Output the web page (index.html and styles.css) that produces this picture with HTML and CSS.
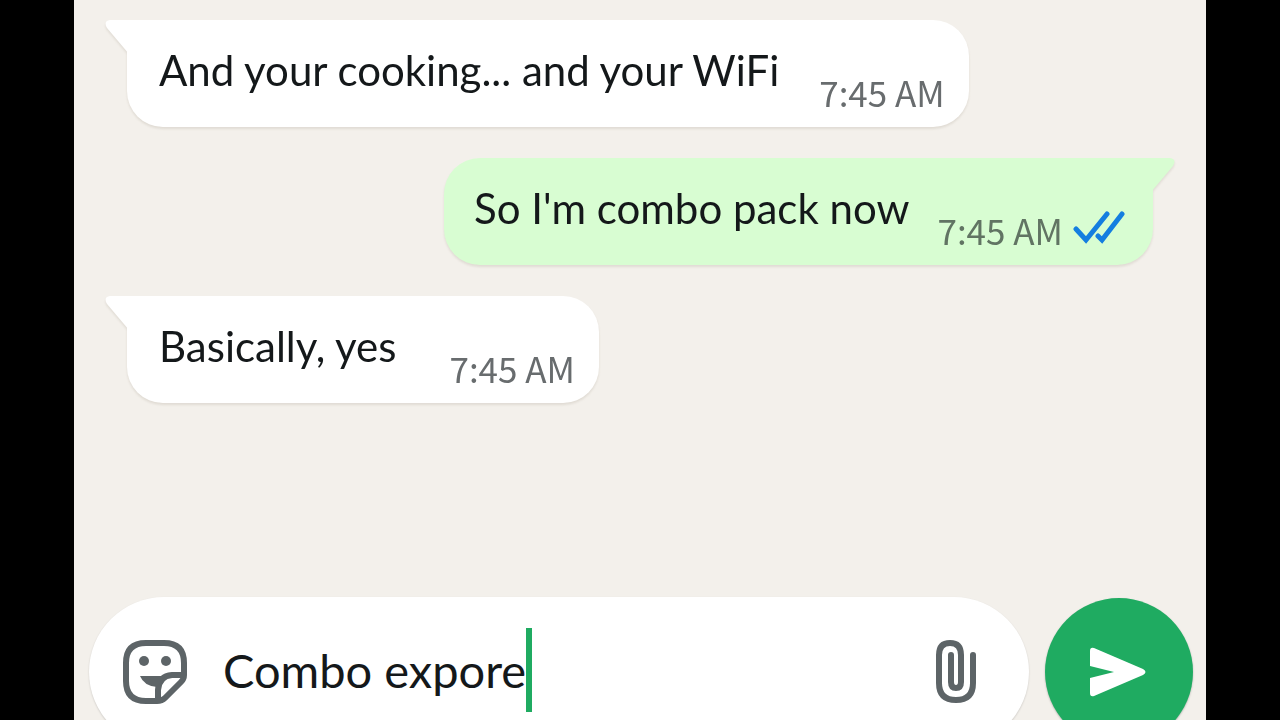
FILE: index.html
```html
<!DOCTYPE html>
<html lang="en">
    <head>
        <meta charset="utf-8">
        <title>Chat</title>
        <link rel="stylesheet" href="styles.css">
    </head>
    <body>
        <main class="chat">
            <section class="messages">
                <div class="bubble received">
                    <svg class="tail" viewBox="0 0 24 34"><path d="M24 0H5Q-2 1 2 8L24 34Z"/></svg>
                    <p class="text">And your cooking... and your WiFi</p>
                    <time class="time">7:45 AM</time>
                </div>
                <div class="bubble sent">
                    <svg class="tail" viewBox="0 0 24 34"><path d="M0 0H19Q26 1 22 8L0 34Z"/></svg>
                    <p class="text">So I'm combo pack now</p>
                    <time class="time">7:45 AM</time>
                    <svg class="ticks" viewBox="0 0 52 34"><path d="M3 19L13 30L34 4M25 26L29 30L49 4"/></svg>
                </div>
                <div class="bubble received">
                    <svg class="tail" viewBox="0 0 24 34"><path d="M24 0H5Q-2 1 2 8L24 34Z"/></svg>
                    <p class="text">Basically, yes</p>
                    <time class="time">7:45 AM</time>
                </div>
            </section>

            <form class="composer">
                <div class="field">
                    <button type="button" class="icon-btn" aria-label="Stickers">
                        <svg class="sticker" viewBox="0 0 64 64">
                            <path class="line" d="M23 3H41Q61 3 61 23V35Q61 39 58 42L42 58Q39 61 34 61H23Q3 61 3 41V23Q3 3 23 3Z"/>
                            <path class="line" d="M35 60V50Q36 36 49 35H60"/>
                            <circle cx="21" cy="21" r="5"/>
                            <circle cx="43" cy="21" r="5"/>
                            <path d="M17 36H42L34 47Q21 46 17 36Z"/>
                        </svg>
                    </button>
                    <div class="typing">
                        <input type="text" class="ipt" value="Combo expore" size="12" aria-label="Message">
                        <span class="caret"></span>
                    </div>
                    <button type="button" class="icon-btn" aria-label="Attach">
                        <svg class="clip" viewBox="0 0 40 64">
                            <path d="M37 15V43Q37 60 20 60Q3 60 3 43V15Q3 3 14 3Q25 3 25 15V42Q25 48 20 48Q15 48 15 42V15"/>
                        </svg>
                    </button>
                </div>
                <button type="button" class="send" aria-label="Send">
                    <svg class="arrow" viewBox="0 0 56 50"><path d="M0 4Q0 0 4 1L53 22Q58 25 53 28L4 49Q0 50 0 46V31L24 25L0 19Z"/></svg>
                </button>
            </form>
        </main>
    </body>
</html>
```
FILE: styles.css
```css
* {
    box-sizing: border-box;
}
body {
    margin: 0;
    padding: 0 74px;
    height: 100vh;
    overflow: hidden;
    background-color: #000;
    font-family: Lato, "Open Sans", sans-serif;
    color: #14181a;
}
button {
    padding: 0;
    border: none;
    background: none;
    cursor: pointer;
}
svg {
    display: block;
}

.chat {
    min-height: 100vh;
    background-color: #f3f0eb;
}
.messages {
    display: flex;
    flex-direction: column;
    align-items: flex-start;
    gap: 31px;
    min-height: calc(100vh - 123px);
    padding: 20px 53px 31px;
}

.bubble {
    position: relative;
    display: flex;
    align-items: flex-end;
    min-width: 472px;
    padding: 20px 24px 15px 32px;
    border-radius: 36px;
    filter: drop-shadow(0 2px 1px rgba(90, 70, 50, 0.12));
}
.received {
    background-color: #fff;
    fill: #fff;
    border-top-left-radius: 0;
}
.sent {
    align-self: flex-end;
    background-color: #d8fdd2;
    fill: #d8fdd2;
    border-top-right-radius: 0;
    padding-left: 30px;
    padding-right: 28px;
}
/* corner of the bubble that points at the speaker */
.tail {
    position: absolute;
    top: 0;
    width: 24px;
    height: 34px;
}
.received .tail {
    left: -22px;
}
.sent .tail {
    right: -22px;
}
.text {
    margin: 0 40px 12px 0;
    font-size: 42px;
    line-height: 60px;
}
.sent .text {
    margin-right: 28px;
}
.time {
    margin-left: auto;
    font-family: "Noto Sans CJK SC", "Noto Sans", sans-serif;
    font-size: 35px;
    line-height: 40px;
    color: #686c6e;
}
.sent .time {
    color: #617463;
}
.ticks {
    width: 52px;
    height: 34px;
    margin: 0 0 6px 10px;
    fill: none;
    stroke: #147ee0;
    stroke-width: 5;
    stroke-linecap: round;
}

.composer {
    display: flex;
    align-items: center;
    gap: 16px;
    padding: 0 13px 0 15px;
}
.field {
    flex: 1;
    display: flex;
    align-items: center;
    height: 150px;
    padding: 0 52px 0 34px;
    border-radius: 75px;
    background-color: #fff;
    box-shadow: 0 1px 2px rgba(0, 0, 0, 0.16);
}
.typing {
    flex: 1;
    display: flex;
    align-items: center;
    margin-left: 36px;
    padding-bottom: 4px;
}
.ipt {
    field-sizing: content;
    padding: 0;
    border: none;
    outline: none;
    background: none;
    font-family: inherit;
    font-size: 47px;
    line-height: 60px;
    color: inherit;
}
.caret {
    width: 6px;
    height: 84px;
    background-color: #1fab61;
}
.sticker {
    width: 64px;
    height: 64px;
    fill: #5d6467;
}
.sticker .line {
    fill: none;
    stroke: #5d6467;
    stroke-width: 6;
}
.clip {
    width: 42px;
    height: 64px;
    fill: none;
    stroke: #5d6467;
    stroke-width: 6;
    stroke-linecap: round;
}
.send {
    display: flex;
    align-items: center;
    justify-content: center;
    width: 148px;
    height: 148px;
    padding-right: 3px;
    border-radius: 50%;
    background-color: #1fab61;
    box-shadow: 0 1px 2px rgba(0, 0, 0, 0.25);
}
.arrow {
    width: 56px;
    height: 50px;
    fill: #fff;
}
```
